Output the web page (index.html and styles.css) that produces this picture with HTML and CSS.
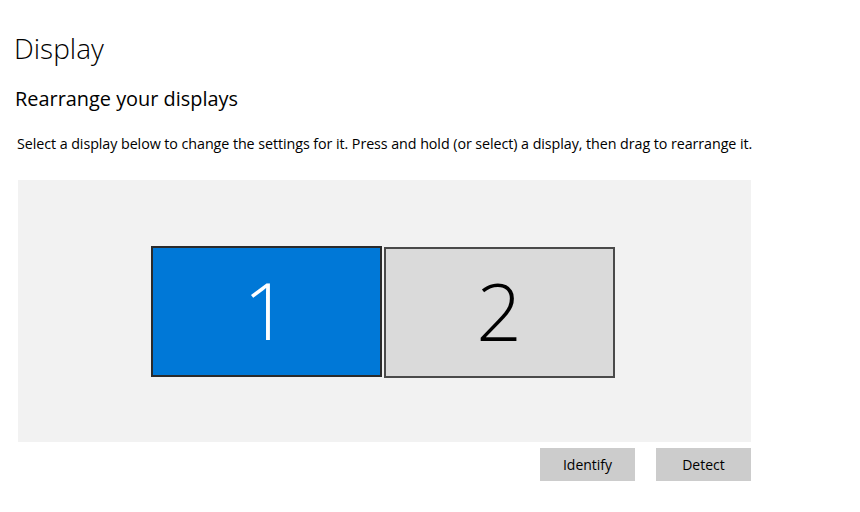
FILE: index.html
```html
<!DOCTYPE html>
<html>
<head>
<meta charset="utf-8">
<link rel="stylesheet" href="styles.css">
</head>
<body>
<main class="page">
  <h1 class="title">Display</h1>
  <h2 class="subtitle">Rearrange your displays</h2>
  <p class="desc">Select a display below to change the settings for it. Press and hold (or select) a display, then drag to rearrange it.</p>
  <section class="canvas">
    <div class="monitor monitor-active">1</div>
    <div class="monitor monitor-idle">2</div>
  </section>
  <div class="actions">
    <button class="btn">Identify</button>
    <button class="btn">Detect</button>
  </div>
</main>
</body>
</html>
```
FILE: styles.css
```css
html, body {
  margin: 0;
  padding: 0;
  background: #ffffff;
}
body {
  font-family: "Open Sans", "Noto Sans", "Liberation Sans", sans-serif;
  color: #000;
}
.page {
  display: flex;
  flex-direction: column;
  padding: 0 0 0 18px;
  width: 733px;
}
.title {
  margin: 30px 0 0 -4px;
  font-size: 28px;
  font-weight: 300;
  line-height: 36px;
}
.subtitle {
  margin: 20px 0 0 -3px;
  font-size: 19.9px;
  font-weight: 400;
  line-height: 26px;
}
.desc {
  margin: 22px 0 0 -1px;
  font-size: 14.3px;
  line-height: 20px;
  letter-spacing: -0.07px;
  white-space: nowrap;
}
.canvas {
  margin-top: 26px;
  height: 262px;
  background: #f2f2f2;
  display: flex;
  justify-content: center;
  align-items: center;
  gap: 2px;
  padding-right: 4px;
}
.monitor {
  box-sizing: border-box;
  width: 231px;
  height: 131px;
  border: 2px solid #333333;
  display: flex;
  align-items: center;
  justify-content: center;
  font-size: 80px;
  font-weight: 300;
  line-height: 1;
  padding-bottom: 4px;
}
.monitor-active {
  background: #0078d7;
  color: #ffffff;
  border-color: #2b2b2b;
}
.monitor-idle {
  background: #dadada;
  color: #000000;
  border-color: #4a4a4a;
  margin-top: 2px;
}
.actions {
  display: flex;
  justify-content: flex-end;
  gap: 21px;
  margin-top: 6px;
}
.btn {
  width: 95px;
  height: 33px;
  border: none;
  background: #cccccc;
  font-family: "Open Sans", "Noto Sans", "Liberation Sans", sans-serif;
  font-size: 14px;
  color: #000;
  padding: 0;
}
```
